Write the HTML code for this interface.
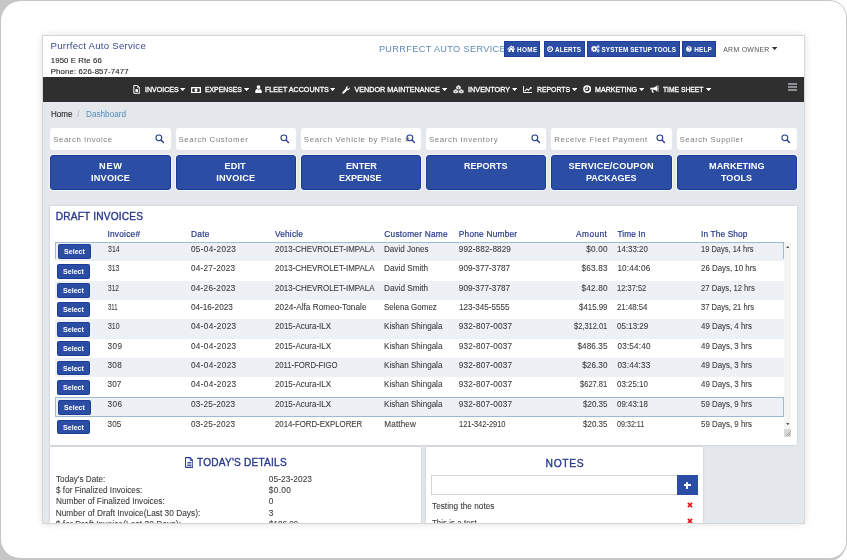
<!DOCTYPE html>
<html><head><meta charset="utf-8"><title>Dashboard</title>
<style>
*{box-sizing:border-box;margin:0;padding:0}
html,body{width:847px;height:560px;overflow:hidden;background:#fdfdfd;font-family:"Liberation Sans",sans-serif;}
#bg{position:absolute;left:-20px;top:0;width:867px;height:561px;background:#c6c6c6;border-radius:0 18px 18px 0 / 0 18px 20px 0;}
#dev{position:absolute;left:1px;top:1px;width:845px;height:557px;background:#fff;border-radius:20px 16.5px 16.5px 19px;}
#scr{will-change:transform;opacity:.999;position:absolute;left:42px;top:35px;width:763px;height:489px;background:#e4e7ec;overflow:hidden;border:1px solid #d6d6d6;box-shadow:0 0 8px rgba(0,0,0,.13);}
.t{position:absolute;white-space:nowrap;line-height:1;transform-origin:0 50%}
.r{position:absolute}
.mag{position:absolute}
.car{position:absolute;width:0;height:0;border-left:2.7px solid transparent;border-right:2.7px solid transparent;border-top:3.2px solid #fff}
</style></head><body>
<div id="bg"></div>
<div id="dev"></div>
<div id="scr">
<div class="r" style="left:0.00px;top:0.00px;width:762.00px;height:41.30px;background:#fff;"></div>
<div class="t" style="left:7.60px;top:5.37px;font-size:9.60px;color:#3a4a8e;letter-spacing:0.251px;">Purrfect Auto Service</div>
<div class="t" style="left:7.80px;top:21.44px;font-size:7.80px;color:#262626;letter-spacing:0.094px;-webkit-text-stroke:0.12px #262626;">1950 E Rte 66</div>
<div class="t" style="left:7.80px;top:31.54px;font-size:7.80px;color:#262626;letter-spacing:0.124px;-webkit-text-stroke:0.12px #262626;">Phone: 626-857-7477</div>
<div class="t" style="left:335.90px;top:8.77px;font-size:9.20px;color:#5f8ab8;letter-spacing:0.343px;">PURRFECT AUTO SERVICE</div>
<div class="r" style="left:461.20px;top:5.40px;width:36.20px;height:15.60px;background:#2c4da4;border:1px solid #1f3f9a;"></div>
<div class="t" style="left:474.00px;top:10.56px;font-size:6.30px;color:#fff;letter-spacing:0.433px;font-weight:bold;">HOME</div>
<svg class="mag" style="left:464.20px;top:9.40px" width="8.40" height="7.00" viewBox="0 0 18 14" preserveAspectRatio="none"><path d="M9 1.2L0.6 8.200l1 1.200L9 3.400l7.400 6 1-1.200L14.500 5.800V1.800h-2v2.300z" fill="#fff"/><path d="M9 4.600l-6 4.900V14h4.300v-3.600h3.400V14H15V9.500z" fill="#fff"/></svg>
<div class="r" style="left:500.60px;top:5.40px;width:41.20px;height:15.60px;background:#2c4da4;border:1px solid #1f3f9a;"></div>
<div class="t" style="left:512.10px;top:10.56px;font-size:6.30px;color:#fff;letter-spacing:0.140px;font-weight:bold;">ALERTS</div>
<svg class="mag" style="left:504.00px;top:10.00px" width="6.20" height="6.20" viewBox="0 0 16 16" preserveAspectRatio="none"><circle cx="8" cy="8" r="6.2" fill="none" stroke="#fff" stroke-width="2.9"/><path d="M8 3.8V8.6H4.6" fill="none" stroke="#fff" stroke-width="2.2"/></svg>
<div class="r" style="left:544.30px;top:5.40px;width:93.00px;height:15.60px;background:#2c4da4;border:1px solid #1f3f9a;"></div>
<div class="t" style="left:558.50px;top:10.56px;font-size:6.30px;color:#fff;letter-spacing:0.160px;font-weight:bold;">SYSTEM SETUP TOOLS</div>
<svg class="mag" style="left:548.00px;top:9.40px" width="9.00" height="7.40" viewBox="0 0 20 16" preserveAspectRatio="none"><circle cx="7" cy="8.5" r="5.6" fill="none" stroke="#fff" stroke-width="2.6" stroke-dasharray="2.6 1.8"/><circle cx="7" cy="8.5" r="3.7" fill="none" stroke="#fff" stroke-width="3"/><circle cx="15.8" cy="3.7" r="3" fill="none" stroke="#fff" stroke-width="1.5" stroke-dasharray="1.4 0.95"/><circle cx="15.8" cy="3.7" r="1.7" fill="none" stroke="#fff" stroke-width="1.9"/><circle cx="15.8" cy="12.5" r="3" fill="none" stroke="#fff" stroke-width="1.5" stroke-dasharray="1.4 0.95"/><circle cx="15.8" cy="12.5" r="1.7" fill="none" stroke="#fff" stroke-width="1.9"/></svg>
<div class="r" style="left:639.20px;top:5.40px;width:33.60px;height:15.60px;background:#2c4da4;border:1px solid #1f3f9a;"></div>
<div class="t" style="left:651.20px;top:10.56px;font-size:6.30px;color:#fff;letter-spacing:0.233px;font-weight:bold;">HELP</div>
<svg class="mag" style="left:643.20px;top:10.20px" width="5.80" height="5.80" viewBox="0 0 16 16" preserveAspectRatio="none"><circle cx="8" cy="8" r="7.600" fill="#fff"/><path d="M5.600 6.200c0-1.600 1.100-2.500 2.500-2.500s2.400 0.900 2.400 2.100c0 1.700-2.200 1.800-2.200 3.600" fill="none" stroke="#2c4da4" stroke-width="1.900"/><circle cx="8.200" cy="12.200" r="1.200" fill="#2c4da4"/></svg>
<div class="t" style="left:680.20px;top:10.57px;font-size:6.90px;color:#555;letter-spacing:0.313px;">ARM OWNER</div>
<svg class="mag" style="left:729.10px;top:11.40px" width="5.30" height="3.20" viewBox="0 0 10 6" preserveAspectRatio="none"><path d="M0 0H10L5 6Z" fill="#333"/></svg>
<div class="r" style="left:0.00px;top:41.30px;width:762.00px;height:24.70px;background:#2f2f2f;"></div>
<div class="t" style="left:101.80px;top:50.23px;font-size:7.20px;color:#fff;transform:scaleX(0.9794);-webkit-text-stroke:0.30px #fff;">INVOICES</div>
<svg class="mag" style="left:137.20px;top:52.20px" width="5.20" height="3.20" viewBox="0 0 10 6" preserveAspectRatio="none"><path d="M0 0H10L5 6Z" fill="#fff"/></svg>
<div class="t" style="left:162.30px;top:50.23px;font-size:7.20px;color:#fff;transform:scaleX(0.9506);-webkit-text-stroke:0.30px #fff;">EXPENSES</div>
<svg class="mag" style="left:200.70px;top:52.20px" width="5.20" height="3.20" viewBox="0 0 10 6" preserveAspectRatio="none"><path d="M0 0H10L5 6Z" fill="#fff"/></svg>
<div class="t" style="left:221.90px;top:50.23px;font-size:7.20px;color:#fff;transform:scaleX(0.9956);-webkit-text-stroke:0.30px #fff;">FLEET ACCOUNTS</div>
<svg class="mag" style="left:287.40px;top:52.20px" width="5.20" height="3.20" viewBox="0 0 10 6" preserveAspectRatio="none"><path d="M0 0H10L5 6Z" fill="#fff"/></svg>
<div class="t" style="left:311.40px;top:50.23px;font-size:7.20px;color:#fff;letter-spacing:0.023px;-webkit-text-stroke:0.30px #fff;">VENDOR MAINTENANCE</div>
<svg class="mag" style="left:398.50px;top:52.20px" width="5.20" height="3.20" viewBox="0 0 10 6" preserveAspectRatio="none"><path d="M0 0H10L5 6Z" fill="#fff"/></svg>
<div class="t" style="left:425.00px;top:50.23px;font-size:7.20px;color:#fff;letter-spacing:0.057px;-webkit-text-stroke:0.30px #fff;">INVENTORY</div>
<svg class="mag" style="left:468.50px;top:52.20px" width="5.20" height="3.20" viewBox="0 0 10 6" preserveAspectRatio="none"><path d="M0 0H10L5 6Z" fill="#fff"/></svg>
<div class="t" style="left:494.00px;top:50.23px;font-size:7.20px;color:#fff;transform:scaleX(0.9546);-webkit-text-stroke:0.30px #fff;">REPORTS</div>
<svg class="mag" style="left:528.60px;top:52.20px" width="5.20" height="3.20" viewBox="0 0 10 6" preserveAspectRatio="none"><path d="M0 0H10L5 6Z" fill="#fff"/></svg>
<div class="t" style="left:551.70px;top:50.23px;font-size:7.20px;color:#fff;transform:scaleX(0.9859);-webkit-text-stroke:0.30px #fff;">MARKETING</div>
<svg class="mag" style="left:595.80px;top:52.20px" width="5.20" height="3.20" viewBox="0 0 10 6" preserveAspectRatio="none"><path d="M0 0H10L5 6Z" fill="#fff"/></svg>
<div class="t" style="left:620.30px;top:50.23px;font-size:7.20px;color:#fff;transform:scaleX(0.9351);-webkit-text-stroke:0.30px #fff;">TIME SHEET</div>
<svg class="mag" style="left:663.00px;top:52.20px" width="5.20" height="3.20" viewBox="0 0 10 6" preserveAspectRatio="none"><path d="M0 0H10L5 6Z" fill="#fff"/></svg>
<svg class="mag" style="left:89.90px;top:49.20px" width="7.60" height="8.80" viewBox="0 0 14 16" preserveAspectRatio="none"><path d="M1.5 1h7l4 4v10h-11z" fill="none" stroke="#fff" stroke-width="1.8" stroke-linejoin="round"/><path d="M8.5 1v4h4" fill="none" stroke="#fff" stroke-width="1.4"/><rect x="4.5" y="7.5" width="5" height="5" fill="#fff"/></svg>
<svg class="mag" style="left:148.20px;top:50.60px" width="10.00" height="6.20" viewBox="0 0 20 12" preserveAspectRatio="none"><rect x="0" y="0" width="20" height="12" rx="1" fill="#fff"/><rect x="2.4" y="2.4" width="15.2" height="7.2" rx="2.5" fill="#2f2f2f"/><ellipse cx="10" cy="6" rx="3" ry="3.6" fill="#fff"/></svg>
<svg class="mag" style="left:211.50px;top:49.30px" width="7.00" height="8.10" viewBox="0 0 14 16" preserveAspectRatio="none"><circle cx="7" cy="4.2" r="3.8" fill="#fff"/><path d="M0.5 16v-3.5c0-3 2.2-4.8 4-4.8l2.5 1.6 2.5-1.6c1.8 0 4 1.8 4 4.8V16z" fill="#fff"/></svg>
<svg class="mag" style="left:299.30px;top:49.50px" width="7.90" height="8.00" viewBox="0 0 16 16" preserveAspectRatio="none"><path d="M1.2 14.8a1.9 1.9 0 0 1 0-2.7L7.6 5.7A4.6 4.6 0 0 1 13.2 0.4L10.6 3l0.5 2 2 0.5 2.6-2.6A4.6 4.6 0 0 1 10.4 8.5L3.9 14.8a1.9 1.9 0 0 1-2.7 0z" fill="#fff"/></svg>
<svg class="mag" style="left:409.90px;top:49.30px" width="11.00" height="8.70" viewBox="0 0 22 18" preserveAspectRatio="none"><path d="M11 0.5l4.6 2v4.6L11 9.2 6.4 7.1V2.5z" fill="#fff"/><path d="M5.6 8.6l4.8 2.1v4.8L5.6 17.7 0.8 15.5v-4.8z" fill="#fff"/><path d="M16.4 8.6l4.8 2.1v4.8l-4.8 2.2-4.8-2.2v-4.8z" fill="#fff"/><path d="M11 5.2v4M5.6 13.2v4.5M16.4 13.2v4.5M6.4 2.8L11 5l4.6-2.2M0.8 11l4.8 2.2 4.8-2.2M11.6 11l4.8 2.2 4.8-2.2" stroke="#2f2f2f" stroke-width="1" fill="none"/></svg>
<svg class="mag" style="left:480.00px;top:50.00px" width="9.30" height="7.00" viewBox="0 0 18 14" preserveAspectRatio="none"><path d="M1 0v13h17" fill="none" stroke="#fff" stroke-width="1.9"/><path d="M3.5 10.5l4-4.6 3 2.6 5-5.6" fill="none" stroke="#fff" stroke-width="2"/><path d="M12.6 2h4v4z" fill="#fff"/></svg>
<svg class="mag" style="left:539.60px;top:49.40px" width="8.30" height="8.20" viewBox="0 0 16 16" preserveAspectRatio="none"><circle cx="8" cy="8" r="6.2" fill="none" stroke="#fff" stroke-width="2.9"/><path d="M8 3.8V8.6H4.6" fill="none" stroke="#fff" stroke-width="2.2"/></svg>
<svg class="mag" style="left:606.90px;top:49.20px" width="8.90" height="8.10" viewBox="0 0 18 16" preserveAspectRatio="none"><path d="M0.5 5.2h4.5c3.5 0 7-2 9.5-4.6v12.8C12 10.800 8.5 9 5 9H0.5z" fill="#fff"/><path d="M15.5 5.2a2 2 0 0 1 0 3.6z" fill="#fff"/><path d="M3 9.5h3c0 2 0.500 4 2 5.800H5c-1.200-1.500-2-3.500-2-5.800z" fill="#fff"/><path d="M16.300 0.600v12.800" stroke="#fff" stroke-width="1.400"/></svg>
<div class="r" style="left:745.20px;top:47.30px;width:8.40px;height:1.70px;background:#8c9096;"></div>
<div class="r" style="left:745.20px;top:50.15px;width:8.40px;height:1.70px;background:#8c9096;"></div>
<div class="r" style="left:745.20px;top:53.00px;width:8.40px;height:1.70px;background:#8c9096;"></div>
<div class="t" style="left:7.80px;top:73.50px;font-size:8.30px;color:#2e2e2e;transform:scaleX(0.9666);-webkit-text-stroke:0.15px #2e2e2e;">Home</div>
<div class="t" style="left:34.30px;top:73.50px;font-size:8.30px;color:#b8b8b8;">/</div>
<div class="t" style="left:43.00px;top:73.50px;font-size:8.30px;color:#4f8fba;transform:scaleX(0.9851);">Dashboard</div>
<div class="r" style="left:7.30px;top:91.90px;width:120.40px;height:22.40px;background:#fff;border-radius:3px;"></div>
<div class="t" style="left:10.20px;top:99.69px;font-size:7.90px;color:#808080;letter-spacing:0.519px;">Search Invoice</div>
<svg class="mag" style="left:112.00px;top:98.40px" width="9.4" height="9.4" viewBox="0 0 20 20"><circle cx="8.2" cy="8.2" r="6.2" fill="none" stroke="#253b8e" stroke-width="2.3"/><path d="M13.2 13.2 L18 18" stroke="#253b8e" stroke-width="3" stroke-linecap="round"/></svg>
<div class="r" style="left:132.56px;top:91.90px;width:120.40px;height:22.40px;background:#fff;border-radius:3px;"></div>
<div class="t" style="left:135.46px;top:99.69px;font-size:7.90px;color:#808080;letter-spacing:0.567px;">Search Customer</div>
<svg class="mag" style="left:237.26px;top:98.40px" width="9.4" height="9.4" viewBox="0 0 20 20"><circle cx="8.2" cy="8.2" r="6.2" fill="none" stroke="#253b8e" stroke-width="2.3"/><path d="M13.2 13.2 L18 18" stroke="#253b8e" stroke-width="3" stroke-linecap="round"/></svg>
<div class="r" style="left:257.82px;top:91.90px;width:120.40px;height:22.40px;background:#fff;border-radius:3px;"></div>
<div class="t" style="left:260.72px;top:99.69px;font-size:7.90px;color:#808080;letter-spacing:0.665px;">Search Vehicle by Plate #</div>
<svg class="mag" style="left:362.52px;top:98.40px" width="9.4" height="9.4" viewBox="0 0 20 20"><circle cx="8.2" cy="8.2" r="6.2" fill="none" stroke="#253b8e" stroke-width="2.3"/><path d="M13.2 13.2 L18 18" stroke="#253b8e" stroke-width="3" stroke-linecap="round"/></svg>
<div class="r" style="left:383.08px;top:91.90px;width:120.40px;height:22.40px;background:#fff;border-radius:3px;"></div>
<div class="t" style="left:385.98px;top:99.69px;font-size:7.90px;color:#808080;letter-spacing:0.612px;">Search Inventory</div>
<svg class="mag" style="left:487.78px;top:98.40px" width="9.4" height="9.4" viewBox="0 0 20 20"><circle cx="8.2" cy="8.2" r="6.2" fill="none" stroke="#253b8e" stroke-width="2.3"/><path d="M13.2 13.2 L18 18" stroke="#253b8e" stroke-width="3" stroke-linecap="round"/></svg>
<div class="r" style="left:508.34px;top:91.90px;width:120.40px;height:22.40px;background:#fff;border-radius:3px;"></div>
<div class="t" style="left:511.24px;top:99.69px;font-size:7.90px;color:#808080;letter-spacing:0.572px;">Receive Fleet Payment</div>
<svg class="mag" style="left:613.04px;top:98.40px" width="9.4" height="9.4" viewBox="0 0 20 20"><circle cx="8.2" cy="8.2" r="6.2" fill="none" stroke="#253b8e" stroke-width="2.3"/><path d="M13.2 13.2 L18 18" stroke="#253b8e" stroke-width="3" stroke-linecap="round"/></svg>
<div class="r" style="left:633.60px;top:91.90px;width:120.40px;height:22.40px;background:#fff;border-radius:3px;"></div>
<div class="t" style="left:636.50px;top:99.69px;font-size:7.90px;color:#808080;letter-spacing:0.535px;">Search Supplier</div>
<svg class="mag" style="left:738.30px;top:98.40px" width="9.4" height="9.4" viewBox="0 0 20 20"><circle cx="8.2" cy="8.2" r="6.2" fill="none" stroke="#253b8e" stroke-width="2.3"/><path d="M13.2 13.2 L18 18" stroke="#253b8e" stroke-width="3" stroke-linecap="round"/></svg>
<div class="r" style="left:7.30px;top:119.20px;width:120.40px;height:34.50px;background:#2c4da4;border-radius:3px;border:1px solid #1c3c98;box-shadow:0 0 0 1px rgba(255,255,255,.55);"></div>
<div class="t" style="left:56.00px;top:125.57px;font-size:9.20px;color:#fff;letter-spacing:0.768px;font-weight:bold;">NEW</div>
<div class="t" style="left:48.10px;top:138.07px;font-size:9.20px;color:#fff;letter-spacing:0.162px;font-weight:bold;">INVOICE</div>
<div class="r" style="left:132.56px;top:119.20px;width:120.40px;height:34.50px;background:#2c4da4;border-radius:3px;border:1px solid #1c3c98;box-shadow:0 0 0 1px rgba(255,255,255,.55);"></div>
<div class="t" style="left:181.60px;top:125.57px;font-size:9.20px;color:#fff;letter-spacing:0.048px;font-weight:bold;">EDIT</div>
<div class="t" style="left:173.30px;top:138.07px;font-size:9.20px;color:#fff;letter-spacing:0.195px;font-weight:bold;">INVOICE</div>
<div class="r" style="left:257.82px;top:119.20px;width:120.40px;height:34.50px;background:#2c4da4;border-radius:3px;border:1px solid #1c3c98;box-shadow:0 0 0 1px rgba(255,255,255,.55);"></div>
<div class="t" style="left:302.50px;top:126.37px;font-size:9.20px;color:#fff;transform:scaleX(0.9910);font-weight:bold;">ENTER</div>
<div class="t" style="left:296.40px;top:138.37px;font-size:9.20px;color:#fff;transform:scaleX(0.9802);font-weight:bold;">EXPENSE</div>
<div class="r" style="left:383.08px;top:119.20px;width:120.40px;height:34.50px;background:#2c4da4;border-radius:3px;border:1px solid #1c3c98;box-shadow:0 0 0 1px rgba(255,255,255,.55);"></div>
<div class="t" style="left:421.40px;top:126.07px;font-size:9.20px;color:#fff;transform:scaleX(0.9781);font-weight:bold;">REPORTS</div>
<div class="r" style="left:508.34px;top:119.20px;width:120.40px;height:34.50px;background:#2c4da4;border-radius:3px;border:1px solid #1c3c98;box-shadow:0 0 0 1px rgba(255,255,255,.55);"></div>
<div class="t" style="left:525.50px;top:125.57px;font-size:9.20px;color:#fff;letter-spacing:0.157px;font-weight:bold;">SERVICE/COUPON</div>
<div class="t" style="left:543.00px;top:138.17px;font-size:9.20px;color:#fff;transform:scaleX(0.9814);font-weight:bold;">PACKAGES</div>
<div class="r" style="left:633.60px;top:119.20px;width:120.40px;height:34.50px;background:#2c4da4;border-radius:3px;border:1px solid #1c3c98;box-shadow:0 0 0 1px rgba(255,255,255,.55);"></div>
<div class="t" style="left:665.70px;top:126.37px;font-size:9.20px;color:#fff;transform:scaleX(0.9981);font-weight:bold;">MARKETING</div>
<div class="t" style="left:678.00px;top:138.37px;font-size:9.20px;color:#fff;transform:scaleX(0.9834);font-weight:bold;">TOOLS</div>
<div class="r" style="left:7.30px;top:170.00px;width:746.50px;height:239.00px;background:#fff;box-shadow:0 0 2px rgba(0,0,0,.18);"></div>
<div class="t" style="left:12.70px;top:176.33px;font-size:10.10px;color:#28398a;letter-spacing:0.219px;-webkit-text-stroke:0.35px #28398a;">DRAFT INVOICES</div>
<div class="t" style="left:64.50px;top:194.10px;font-size:8.30px;color:#28398a;letter-spacing:0.227px;-webkit-text-stroke:0.20px #28398a;">Invoice#</div>
<div class="t" style="left:147.90px;top:194.10px;font-size:8.30px;color:#28398a;letter-spacing:0.356px;-webkit-text-stroke:0.20px #28398a;">Date</div>
<div class="t" style="left:232.00px;top:194.10px;font-size:8.30px;color:#28398a;letter-spacing:0.189px;-webkit-text-stroke:0.20px #28398a;">Vehicle</div>
<div class="t" style="left:341.30px;top:194.10px;font-size:8.30px;color:#28398a;letter-spacing:0.240px;-webkit-text-stroke:0.20px #28398a;">Customer Name</div>
<div class="t" style="left:415.80px;top:194.10px;font-size:8.30px;color:#28398a;letter-spacing:0.225px;-webkit-text-stroke:0.20px #28398a;">Phone Number</div>
<div class="t" style="left:533.10px;top:194.10px;font-size:8.30px;color:#28398a;letter-spacing:0.419px;-webkit-text-stroke:0.20px #28398a;">Amount</div>
<div class="t" style="left:574.40px;top:194.10px;font-size:8.30px;color:#28398a;letter-spacing:0.106px;-webkit-text-stroke:0.20px #28398a;">Time In</div>
<div class="t" style="left:658.00px;top:194.10px;font-size:8.30px;color:#28398a;letter-spacing:0.143px;-webkit-text-stroke:0.20px #28398a;">In The Shop</div>
<div class="r" style="left:12.20px;top:205.80px;width:728.50px;height:19.35px;background:#edf0f5;"></div>
<div class="r" style="left:12.00px;top:206.00px;width:728.70px;height:17.00px;background:transparent;border:1px solid #9dbbd0;border-bottom:none;border-right-width:1.6px;"></div>
<div class="r" style="left:14.90px;top:208.40px;width:33.30px;height:14.90px;background:#2c4da4;border-radius:1.5px;border:1px solid #1c3c98;"></div>
<div class="t" style="left:20.90px;top:212.43px;font-size:7.40px;color:#fff;transform:scaleX(0.9586);font-weight:bold;">Select</div>
<div class="t" style="left:64.50px;top:209.95px;font-size:8.20px;color:#3a3a3a;transform:scaleX(0.8552);-webkit-text-stroke:0.08px #3a3a3a;">314</div>
<div class="t" style="left:147.90px;top:209.95px;font-size:8.20px;color:#3a3a3a;letter-spacing:0.339px;-webkit-text-stroke:0.08px #3a3a3a;">05-04-2023</div>
<div class="t" style="left:232.00px;top:209.95px;font-size:8.20px;color:#3a3a3a;transform:scaleX(0.9685);-webkit-text-stroke:0.08px #3a3a3a;">2013-CHEVROLET-IMPALA</div>
<div class="t" style="left:341.30px;top:209.95px;font-size:8.20px;color:#3a3a3a;transform:scaleX(0.9884);-webkit-text-stroke:0.08px #3a3a3a;">David Jones</div>
<div class="t" style="left:415.80px;top:209.95px;font-size:8.20px;color:#3a3a3a;letter-spacing:0.103px;-webkit-text-stroke:0.08px #3a3a3a;">992-882-8829</div>
<div class="t" style="left:543.20px;top:209.95px;font-size:8.20px;color:#3a3a3a;letter-spacing:0.195px;-webkit-text-stroke:0.08px #3a3a3a;">$0.00</div>
<div class="t" style="left:574.40px;top:209.95px;font-size:8.20px;color:#3a3a3a;transform:scaleX(0.9681);-webkit-text-stroke:0.08px #3a3a3a;">14:33:20</div>
<div class="t" style="left:658.00px;top:209.95px;font-size:8.20px;color:#3a3a3a;transform:scaleX(0.9159);-webkit-text-stroke:0.08px #3a3a3a;">19 Days, 14 hrs</div>
<div class="r" style="left:14.20px;top:227.75px;width:33.30px;height:14.90px;background:#2c4da4;border-radius:1.5px;border:1px solid #1c3c98;"></div>
<div class="t" style="left:20.20px;top:231.78px;font-size:7.40px;color:#fff;transform:scaleX(0.9586);font-weight:bold;">Select</div>
<div class="t" style="left:64.50px;top:229.30px;font-size:8.20px;color:#3a3a3a;transform:scaleX(0.8259);-webkit-text-stroke:0.08px #3a3a3a;">313</div>
<div class="t" style="left:147.90px;top:229.30px;font-size:8.20px;color:#3a3a3a;letter-spacing:0.262px;-webkit-text-stroke:0.08px #3a3a3a;">04-27-2023</div>
<div class="t" style="left:232.00px;top:229.30px;font-size:8.20px;color:#3a3a3a;transform:scaleX(0.9685);-webkit-text-stroke:0.08px #3a3a3a;">2013-CHEVROLET-IMPALA</div>
<div class="t" style="left:341.30px;top:229.30px;font-size:8.20px;color:#3a3a3a;transform:scaleX(0.9999);-webkit-text-stroke:0.08px #3a3a3a;">David Smith</div>
<div class="t" style="left:415.80px;top:229.30px;font-size:8.20px;color:#3a3a3a;letter-spacing:0.030px;-webkit-text-stroke:0.08px #3a3a3a;">909-377-3787</div>
<div class="t" style="left:538.40px;top:229.30px;font-size:8.20px;color:#3a3a3a;letter-spacing:0.204px;-webkit-text-stroke:0.08px #3a3a3a;">$63.83</div>
<div class="t" style="left:574.40px;top:229.30px;font-size:8.20px;color:#3a3a3a;letter-spacing:0.140px;-webkit-text-stroke:0.08px #3a3a3a;">10:44:06</div>
<div class="t" style="left:658.00px;top:229.30px;font-size:8.20px;color:#3a3a3a;transform:scaleX(0.9647);-webkit-text-stroke:0.08px #3a3a3a;">26 Days, 10 hrs</div>
<div class="r" style="left:12.20px;top:244.50px;width:728.50px;height:19.35px;background:#edf0f5;"></div>
<div class="r" style="left:14.20px;top:247.10px;width:33.30px;height:14.90px;background:#2c4da4;border-radius:1.5px;border:1px solid #1c3c98;"></div>
<div class="t" style="left:20.20px;top:251.13px;font-size:7.40px;color:#fff;transform:scaleX(0.9586);font-weight:bold;">Select</div>
<div class="t" style="left:64.50px;top:248.65px;font-size:8.20px;color:#3a3a3a;transform:scaleX(0.7967);-webkit-text-stroke:0.08px #3a3a3a;">312</div>
<div class="t" style="left:147.90px;top:248.65px;font-size:8.20px;color:#3a3a3a;letter-spacing:0.295px;-webkit-text-stroke:0.08px #3a3a3a;">04-26-2023</div>
<div class="t" style="left:232.00px;top:248.65px;font-size:8.20px;color:#3a3a3a;transform:scaleX(0.9685);-webkit-text-stroke:0.08px #3a3a3a;">2013-CHEVROLET-IMPALA</div>
<div class="t" style="left:341.30px;top:248.65px;font-size:8.20px;color:#3a3a3a;transform:scaleX(0.9999);-webkit-text-stroke:0.08px #3a3a3a;">David Smith</div>
<div class="t" style="left:415.80px;top:248.65px;font-size:8.20px;color:#3a3a3a;letter-spacing:0.030px;-webkit-text-stroke:0.08px #3a3a3a;">909-377-3787</div>
<div class="t" style="left:538.40px;top:248.65px;font-size:8.20px;color:#3a3a3a;letter-spacing:0.204px;-webkit-text-stroke:0.08px #3a3a3a;">$42.80</div>
<div class="t" style="left:574.40px;top:248.65px;font-size:8.20px;color:#3a3a3a;transform:scaleX(0.9179);-webkit-text-stroke:0.08px #3a3a3a;">12:37:52</div>
<div class="t" style="left:658.00px;top:248.65px;font-size:8.20px;color:#3a3a3a;transform:scaleX(0.9368);-webkit-text-stroke:0.08px #3a3a3a;">27 Days, 12 hrs</div>
<div class="r" style="left:14.20px;top:266.45px;width:33.30px;height:14.90px;background:#2c4da4;border-radius:1.5px;border:1px solid #1c3c98;"></div>
<div class="t" style="left:20.20px;top:270.48px;font-size:7.40px;color:#fff;transform:scaleX(0.9586);font-weight:bold;">Select</div>
<div class="t" style="left:64.50px;top:268.00px;font-size:8.20px;color:#3a3a3a;transform:scaleX(0.7267);-webkit-text-stroke:0.08px #3a3a3a;">311</div>
<div class="t" style="left:147.90px;top:268.00px;font-size:8.20px;color:#3a3a3a;letter-spacing:0.006px;-webkit-text-stroke:0.08px #3a3a3a;">04-16-2023</div>
<div class="t" style="left:232.00px;top:268.00px;font-size:8.20px;color:#3a3a3a;letter-spacing:0.042px;-webkit-text-stroke:0.08px #3a3a3a;">2024-Alfa Romeo-Tonale</div>
<div class="t" style="left:341.30px;top:268.00px;font-size:8.20px;color:#3a3a3a;transform:scaleX(0.9753);-webkit-text-stroke:0.08px #3a3a3a;">Selena Gomez</div>
<div class="t" style="left:415.80px;top:268.00px;font-size:8.20px;color:#3a3a3a;transform:scaleX(0.9909);-webkit-text-stroke:0.08px #3a3a3a;">123-345-5555</div>
<div class="t" style="left:536.00px;top:268.00px;font-size:8.20px;color:#3a3a3a;transform:scaleX(0.9615);-webkit-text-stroke:0.08px #3a3a3a;">$415.99</div>
<div class="t" style="left:574.40px;top:268.00px;font-size:8.20px;color:#3a3a3a;transform:scaleX(0.9555);-webkit-text-stroke:0.08px #3a3a3a;">21:48:54</div>
<div class="t" style="left:658.00px;top:268.00px;font-size:8.20px;color:#3a3a3a;transform:scaleX(0.9229);-webkit-text-stroke:0.08px #3a3a3a;">37 Days, 21 hrs</div>
<div class="r" style="left:12.20px;top:283.20px;width:728.50px;height:19.35px;background:#edf0f5;"></div>
<div class="r" style="left:14.20px;top:285.80px;width:33.30px;height:14.90px;background:#2c4da4;border-radius:1.5px;border:1px solid #1c3c98;"></div>
<div class="t" style="left:20.20px;top:289.83px;font-size:7.40px;color:#fff;transform:scaleX(0.9586);font-weight:bold;">Select</div>
<div class="t" style="left:64.50px;top:287.35px;font-size:8.20px;color:#3a3a3a;transform:scaleX(0.8479);-webkit-text-stroke:0.08px #3a3a3a;">310</div>
<div class="t" style="left:147.90px;top:287.35px;font-size:8.20px;color:#3a3a3a;letter-spacing:0.373px;-webkit-text-stroke:0.08px #3a3a3a;">04-04-2023</div>
<div class="t" style="left:232.00px;top:287.35px;font-size:8.20px;color:#3a3a3a;transform:scaleX(0.9785);-webkit-text-stroke:0.08px #3a3a3a;">2015-Acura-ILX</div>
<div class="t" style="left:341.30px;top:287.35px;font-size:8.20px;color:#3a3a3a;transform:scaleX(0.9871);-webkit-text-stroke:0.08px #3a3a3a;">Kishan Shingala</div>
<div class="t" style="left:415.80px;top:287.35px;font-size:8.20px;color:#3a3a3a;letter-spacing:0.212px;-webkit-text-stroke:0.08px #3a3a3a;">932-807-0037</div>
<div class="t" style="left:531.20px;top:287.35px;font-size:8.20px;color:#3a3a3a;transform:scaleX(0.9128);-webkit-text-stroke:0.08px #3a3a3a;">$2,312.01</div>
<div class="t" style="left:574.40px;top:287.35px;font-size:8.20px;color:#3a3a3a;transform:scaleX(0.9806);-webkit-text-stroke:0.08px #3a3a3a;">05:13:29</div>
<div class="t" style="left:658.00px;top:287.35px;font-size:8.20px;color:#3a3a3a;transform:scaleX(0.9647);-webkit-text-stroke:0.08px #3a3a3a;">49 Days, 4 hrs</div>
<div class="r" style="left:14.20px;top:305.15px;width:33.30px;height:14.90px;background:#2c4da4;border-radius:1.5px;border:1px solid #1c3c98;"></div>
<div class="t" style="left:20.20px;top:309.18px;font-size:7.40px;color:#fff;transform:scaleX(0.9586);font-weight:bold;">Select</div>
<div class="t" style="left:64.50px;top:306.70px;font-size:8.20px;color:#3a3a3a;letter-spacing:0.409px;-webkit-text-stroke:0.08px #3a3a3a;">309</div>
<div class="t" style="left:147.90px;top:306.70px;font-size:8.20px;color:#3a3a3a;letter-spacing:0.373px;-webkit-text-stroke:0.08px #3a3a3a;">04-04-2023</div>
<div class="t" style="left:232.00px;top:306.70px;font-size:8.20px;color:#3a3a3a;transform:scaleX(0.9785);-webkit-text-stroke:0.08px #3a3a3a;">2015-Acura-ILX</div>
<div class="t" style="left:341.30px;top:306.70px;font-size:8.20px;color:#3a3a3a;transform:scaleX(0.9871);-webkit-text-stroke:0.08px #3a3a3a;">Kishan Shingala</div>
<div class="t" style="left:415.80px;top:306.70px;font-size:8.20px;color:#3a3a3a;letter-spacing:0.212px;-webkit-text-stroke:0.08px #3a3a3a;">932-807-0037</div>
<div class="t" style="left:534.40px;top:306.70px;font-size:8.20px;color:#3a3a3a;letter-spacing:0.076px;-webkit-text-stroke:0.08px #3a3a3a;">$486.35</div>
<div class="t" style="left:574.40px;top:306.70px;font-size:8.20px;color:#3a3a3a;letter-spacing:0.197px;-webkit-text-stroke:0.08px #3a3a3a;">03:54:40</div>
<div class="t" style="left:658.00px;top:306.70px;font-size:8.20px;color:#3a3a3a;transform:scaleX(0.9647);-webkit-text-stroke:0.08px #3a3a3a;">49 Days, 3 hrs</div>
<div class="r" style="left:12.20px;top:321.90px;width:728.50px;height:19.35px;background:#edf0f5;"></div>
<div class="r" style="left:14.20px;top:324.50px;width:33.30px;height:14.90px;background:#2c4da4;border-radius:1.5px;border:1px solid #1c3c98;"></div>
<div class="t" style="left:20.20px;top:328.53px;font-size:7.40px;color:#fff;transform:scaleX(0.9586);font-weight:bold;">Select</div>
<div class="t" style="left:64.50px;top:326.05px;font-size:8.20px;color:#3a3a3a;letter-spacing:0.309px;-webkit-text-stroke:0.08px #3a3a3a;">308</div>
<div class="t" style="left:147.90px;top:326.05px;font-size:8.20px;color:#3a3a3a;letter-spacing:0.373px;-webkit-text-stroke:0.08px #3a3a3a;">04-04-2023</div>
<div class="t" style="left:232.00px;top:326.05px;font-size:8.20px;color:#3a3a3a;transform:scaleX(0.9417);-webkit-text-stroke:0.08px #3a3a3a;">2011-FORD-FIGO</div>
<div class="t" style="left:341.30px;top:326.05px;font-size:8.20px;color:#3a3a3a;transform:scaleX(0.9871);-webkit-text-stroke:0.08px #3a3a3a;">Kishan Shingala</div>
<div class="t" style="left:415.80px;top:326.05px;font-size:8.20px;color:#3a3a3a;letter-spacing:0.212px;-webkit-text-stroke:0.08px #3a3a3a;">932-807-0037</div>
<div class="t" style="left:539.20px;top:326.05px;font-size:8.20px;color:#3a3a3a;letter-spacing:0.044px;-webkit-text-stroke:0.08px #3a3a3a;">$26.30</div>
<div class="t" style="left:574.40px;top:326.05px;font-size:8.20px;color:#3a3a3a;letter-spacing:0.140px;-webkit-text-stroke:0.08px #3a3a3a;">03:44:33</div>
<div class="t" style="left:658.00px;top:326.05px;font-size:8.20px;color:#3a3a3a;transform:scaleX(0.9647);-webkit-text-stroke:0.08px #3a3a3a;">49 Days, 3 hrs</div>
<div class="r" style="left:14.20px;top:343.85px;width:33.30px;height:14.90px;background:#2c4da4;border-radius:1.5px;border:1px solid #1c3c98;"></div>
<div class="t" style="left:20.20px;top:347.88px;font-size:7.40px;color:#fff;transform:scaleX(0.9586);font-weight:bold;">Select</div>
<div class="t" style="left:64.50px;top:345.40px;font-size:8.20px;color:#3a3a3a;letter-spacing:0.109px;-webkit-text-stroke:0.08px #3a3a3a;">307</div>
<div class="t" style="left:147.90px;top:345.40px;font-size:8.20px;color:#3a3a3a;letter-spacing:0.373px;-webkit-text-stroke:0.08px #3a3a3a;">04-04-2023</div>
<div class="t" style="left:232.00px;top:345.40px;font-size:8.20px;color:#3a3a3a;transform:scaleX(0.9785);-webkit-text-stroke:0.08px #3a3a3a;">2015-Acura-ILX</div>
<div class="t" style="left:341.30px;top:345.40px;font-size:8.20px;color:#3a3a3a;transform:scaleX(0.9871);-webkit-text-stroke:0.08px #3a3a3a;">Kishan Shingala</div>
<div class="t" style="left:415.80px;top:345.40px;font-size:8.20px;color:#3a3a3a;letter-spacing:0.212px;-webkit-text-stroke:0.08px #3a3a3a;">932-807-0037</div>
<div class="t" style="left:537.20px;top:345.40px;font-size:8.20px;color:#3a3a3a;transform:scaleX(0.9210);-webkit-text-stroke:0.08px #3a3a3a;">$627.81</div>
<div class="t" style="left:574.40px;top:345.40px;font-size:8.20px;color:#3a3a3a;transform:scaleX(0.9681);-webkit-text-stroke:0.08px #3a3a3a;">03:25:10</div>
<div class="t" style="left:658.00px;top:345.40px;font-size:8.20px;color:#3a3a3a;transform:scaleX(0.9647);-webkit-text-stroke:0.08px #3a3a3a;">49 Days, 3 hrs</div>
<div class="r" style="left:12.20px;top:361.10px;width:728.50px;height:19.35px;background:#edf0f5;"></div>
<div class="r" style="left:12.00px;top:361.30px;width:728.70px;height:20.05px;background:transparent;border:1px solid #9dbbd0;"></div>
<div class="r" style="left:14.90px;top:363.70px;width:33.30px;height:14.90px;background:#2c4da4;border-radius:1.5px;border:1px solid #1c3c98;"></div>
<div class="t" style="left:20.90px;top:367.73px;font-size:7.40px;color:#fff;transform:scaleX(0.9586);font-weight:bold;">Select</div>
<div class="t" style="left:64.50px;top:365.25px;font-size:8.20px;color:#3a3a3a;letter-spacing:0.409px;-webkit-text-stroke:0.08px #3a3a3a;">306</div>
<div class="t" style="left:147.90px;top:365.25px;font-size:8.20px;color:#3a3a3a;letter-spacing:0.262px;-webkit-text-stroke:0.08px #3a3a3a;">03-25-2023</div>
<div class="t" style="left:232.00px;top:365.25px;font-size:8.20px;color:#3a3a3a;transform:scaleX(0.9785);-webkit-text-stroke:0.08px #3a3a3a;">2015-Acura-ILX</div>
<div class="t" style="left:341.30px;top:365.25px;font-size:8.20px;color:#3a3a3a;transform:scaleX(0.9871);-webkit-text-stroke:0.08px #3a3a3a;">Kishan Shingala</div>
<div class="t" style="left:415.80px;top:365.25px;font-size:8.20px;color:#3a3a3a;letter-spacing:0.212px;-webkit-text-stroke:0.08px #3a3a3a;">932-807-0037</div>
<div class="t" style="left:540.00px;top:365.25px;font-size:8.20px;color:#3a3a3a;transform:scaleX(0.9769);-webkit-text-stroke:0.08px #3a3a3a;">$20.35</div>
<div class="t" style="left:574.40px;top:365.25px;font-size:8.20px;color:#3a3a3a;transform:scaleX(0.9681);-webkit-text-stroke:0.08px #3a3a3a;">09:43:18</div>
<div class="t" style="left:658.00px;top:365.25px;font-size:8.20px;color:#3a3a3a;transform:scaleX(0.9647);-webkit-text-stroke:0.08px #3a3a3a;">59 Days, 9 hrs</div>
<div class="r" style="left:14.20px;top:383.55px;width:33.30px;height:14.90px;background:#2c4da4;border-radius:1.5px;border:1px solid #1c3c98;"></div>
<div class="t" style="left:20.20px;top:387.58px;font-size:7.40px;color:#fff;transform:scaleX(0.9586);font-weight:bold;">Select</div>
<div class="t" style="left:64.50px;top:385.10px;font-size:8.20px;color:#3a3a3a;letter-spacing:0.109px;-webkit-text-stroke:0.08px #3a3a3a;">305</div>
<div class="t" style="left:147.90px;top:385.10px;font-size:8.20px;color:#3a3a3a;letter-spacing:0.262px;-webkit-text-stroke:0.08px #3a3a3a;">03-25-2023</div>
<div class="t" style="left:232.00px;top:385.10px;font-size:8.20px;color:#3a3a3a;transform:scaleX(0.9531);-webkit-text-stroke:0.08px #3a3a3a;">2014-FORD-EXPLORER</div>
<div class="t" style="left:341.30px;top:385.10px;font-size:8.20px;color:#3a3a3a;letter-spacing:0.118px;-webkit-text-stroke:0.08px #3a3a3a;">Matthew</div>
<div class="t" style="left:415.80px;top:385.10px;font-size:8.20px;color:#3a3a3a;transform:scaleX(0.9125);-webkit-text-stroke:0.08px #3a3a3a;">121-342-2910</div>
<div class="t" style="left:540.00px;top:385.10px;font-size:8.20px;color:#3a3a3a;transform:scaleX(0.9769);-webkit-text-stroke:0.08px #3a3a3a;">$20.35</div>
<div class="t" style="left:574.40px;top:385.10px;font-size:8.20px;color:#3a3a3a;transform:scaleX(0.8719);-webkit-text-stroke:0.08px #3a3a3a;">09:32:11</div>
<div class="t" style="left:658.00px;top:385.10px;font-size:8.20px;color:#3a3a3a;transform:scaleX(0.9647);-webkit-text-stroke:0.08px #3a3a3a;">59 Days, 9 hrs</div>
<div class="r" style="left:740.80px;top:206.00px;width:7.40px;height:187.00px;background:#f4f4f4;"></div>
<div class="r" style="left:740.80px;top:393.00px;width:7.40px;height:7.60px;background:#d9d9d9;"></div>
<svg class="mag" style="left:742.60px;top:209.80px" width="3.60" height="2.10" viewBox="0 0 10 6" preserveAspectRatio="none"><path d="M0 6H10L5 0Z" fill="#505050"/></svg>
<svg class="mag" style="left:742.60px;top:386.60px" width="3.60" height="2.10" viewBox="0 0 10 6" preserveAspectRatio="none"><path d="M0 0H10L5 6Z" fill="#505050"/></svg>
<svg class="mag" style="left:740.80px;top:393.00px" width="7.40" height="7.60" viewBox="0 0 10 10" preserveAspectRatio="none"><path d="M9 3L3 9M9 6L6 9" stroke="#8a8a8a" stroke-width="1"/></svg>
<div class="r" style="left:7.30px;top:410.70px;width:371.00px;height:83.30px;background:#fff;box-shadow:0 0 2px rgba(0,0,0,.18);"></div>
<div class="r" style="left:383.20px;top:410.70px;width:276.80px;height:83.30px;background:#fff;box-shadow:0 0 2px rgba(0,0,0,.18);"></div>
<svg class="mag" style="left:141.50px;top:420.90px" width="8.80" height="11.00" viewBox="0 0 14 16" preserveAspectRatio="none"><path d="M1.6 0.9h6.6l4.2 4.2v9.1a0.9 0.9 0 0 1-0.9 0.9h-9.900a0.900 0.900 0 0 1-0.900-0.900v-12.400a0.900 0.900 0 0 1 0.900-0.900z" fill="none" stroke="#28398a" stroke-width="1.700" stroke-linejoin="round"/><path d="M8.200 0.900v4.200h4.200" fill="none" stroke="#28398a" stroke-width="1.300"/><path d="M3.600 8h6.800M3.600 10.200h6.800M3.600 12.400h6.800" stroke="#28398a" stroke-width="1.300"/></svg>
<div class="t" style="left:154.00px;top:422.33px;font-size:10.10px;color:#28398a;letter-spacing:0.216px;-webkit-text-stroke:0.35px #28398a;">TODAY'S DETAILS</div>
<div class="t" style="left:502.60px;top:423.04px;font-size:10.30px;color:#28398a;letter-spacing:0.655px;-webkit-text-stroke:0.35px #28398a;">NOTES</div>
<div class="t" style="left:12.70px;top:438.60px;font-size:8.30px;color:#3a3a3a;transform:scaleX(0.9855);-webkit-text-stroke:0.08px #3a3a3a;">Today's Date:</div>
<div class="t" style="left:225.80px;top:438.60px;font-size:8.30px;color:#3a3a3a;letter-spacing:0.083px;-webkit-text-stroke:0.08px #3a3a3a;">05-23-2023</div>
<div class="t" style="left:12.70px;top:450.00px;font-size:8.30px;color:#3a3a3a;transform:scaleX(0.9898);-webkit-text-stroke:0.08px #3a3a3a;">$ for Finalized Invoices:</div>
<div class="t" style="left:225.80px;top:450.00px;font-size:8.30px;color:#3a3a3a;letter-spacing:0.307px;-webkit-text-stroke:0.08px #3a3a3a;">$0.00</div>
<div class="t" style="left:12.70px;top:461.40px;font-size:8.30px;color:#3a3a3a;transform:scaleX(0.9951);-webkit-text-stroke:0.08px #3a3a3a;">Number of Finalized Invoices:</div>
<div class="t" style="left:225.80px;top:461.40px;font-size:8.30px;color:#3a3a3a;-webkit-text-stroke:0.08px #3a3a3a;">0</div>
<div class="t" style="left:12.70px;top:472.80px;font-size:8.30px;color:#3a3a3a;letter-spacing:0.018px;-webkit-text-stroke:0.08px #3a3a3a;">Number of Draft Invoice(Last 30 Days):</div>
<div class="t" style="left:225.80px;top:472.80px;font-size:8.30px;color:#3a3a3a;-webkit-text-stroke:0.08px #3a3a3a;">3</div>
<div class="t" style="left:12.70px;top:484.20px;font-size:8.30px;color:#3a3a3a;letter-spacing:0.107px;-webkit-text-stroke:0.08px #3a3a3a;">$ for Draft Invoice(Last 30 Days):</div>
<div class="t" style="left:225.80px;top:484.20px;font-size:8.30px;color:#3a3a3a;transform:scaleX(0.9733);-webkit-text-stroke:0.08px #3a3a3a;">$186.99</div>
<div class="r" style="left:388.20px;top:439.20px;width:246.60px;height:20.10px;background:#fff;border:1px solid #d6d6d6;"></div>
<div class="r" style="left:634.30px;top:439.20px;width:20.40px;height:20.10px;background:#2c4da4;"></div>
<div class="r" style="left:640.90px;top:448.20px;width:7.00px;height:2.20px;background:#fff;border-radius:.6px;"></div>
<div class="r" style="left:643.30px;top:445.80px;width:2.20px;height:7.00px;background:#fff;border-radius:.6px;"></div>
<div class="t" style="left:388.50px;top:465.70px;font-size:8.30px;color:#3a3a3a;transform:scaleX(0.9960);-webkit-text-stroke:0.08px #3a3a3a;">Testing the notes</div>
<div class="t" style="left:388.50px;top:483.40px;font-size:8.30px;color:#3a3a3a;transform:scaleX(0.9617);-webkit-text-stroke:0.08px #3a3a3a;">This is a test</div>
<svg class="mag" style="left:643.70px;top:465.60px" width="6" height="6" viewBox="0 0 10 10"><path d="M1.5 1.5 L8.5 8.5 M8.5 1.5 L1.5 8.5" stroke="#e0101a" stroke-width="2.6"/></svg>
<svg class="mag" style="left:643.70px;top:481.80px" width="6" height="6" viewBox="0 0 10 10"><path d="M1.5 1.5 L8.5 8.5 M8.5 1.5 L1.5 8.5" stroke="#e0101a" stroke-width="2.6"/></svg>
</div>
</body></html>
